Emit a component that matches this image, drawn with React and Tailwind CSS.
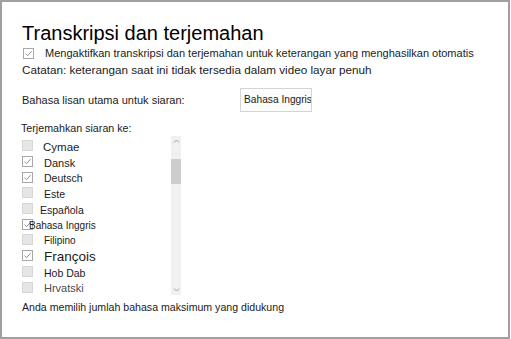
import React from "react";

const languages = [
  { name: "Cymae", size: "text-[11.5px]", ml: "ml-[10px]", checked: false },
  { name: "Dansk", size: "text-[11px]", ml: "ml-[11px]", checked: true },
  { name: "Deutsch", size: "text-[10.5px]", ml: "ml-[11px]", checked: true },
  { name: "Este", size: "text-[10.5px]", ml: "ml-[11px]", checked: false },
  { name: "Española", size: "text-[10.5px]", ml: "ml-[7px]", checked: false },
  { name: "Bahasa Inggris", size: "text-[10px]", ml: "ml-[-4px]", checked: true },
  { name: "Filipino", size: "text-[10px]", ml: "ml-[11px]", checked: false },
  { name: "François", size: "text-[13.5px]", ml: "ml-[11px]", checked: true },
  { name: "Hob Dab", size: "text-[10.5px]", ml: "ml-[11px]", checked: false },
  { name: "Hrvatski", size: "text-[11px]", ml: "ml-[11px]", checked: false, muted: true },
];

function Checkbox({ checked }) {
  if (!checked) {
    return (
      <span className="block h-[11px] w-[11px] shrink-0 border border-[#d6d6d6] bg-[#e6e6e6]" />
    );
  }
  return (
    <span className="flex h-[11px] w-[11px] shrink-0 items-center justify-center border border-[#a8a8a8] bg-white">
      <svg width="9" height="9" viewBox="0 0 9 9" fill="none">
        <path d="M1.5 4.6 L3.6 6.7 L7.6 2.2" stroke="#8c8c8c" strokeWidth="1" />
      </svg>
    </span>
  );
}

function Scrollbar() {
  return (
    <div className="flex h-full w-[10px] flex-col items-center bg-[#f0f0f0]">
      <svg className="mt-[3px]" width="7" height="5" viewBox="0 0 7 5" fill="none">
        <path d="M1 3.5 L3.5 1 L6 3.5" stroke="#a0a0a0" strokeWidth="1" />
      </svg>
      <div className="mt-[15px] h-[25px] w-full bg-[#cdcdcd]" />
      <div className="flex-1" />
      <svg className="mb-[3px]" width="7" height="5" viewBox="0 0 7 5" fill="none">
        <path d="M1 1.5 L3.5 4 L6 1.5" stroke="#a0a0a0" strokeWidth="1" />
      </svg>
    </div>
  );
}

export default function App() {
  return (
    <div className="h-[339px] w-[511px] bg-white font-['Liberation_Sans',Arial,sans-serif] text-[#1b1b1b]">
      <div className="flex h-[339px] w-[510px] flex-col border-2 border-[#a0a0a0] pl-[20px] pt-[19px]">
        <h1 className="text-[20px] leading-[24px] text-black">Transkripsi dan terjemahan</h1>

        <div className="flex h-[16px] items-center">
          <span className="ml-[1px]">
            <Checkbox checked />
          </span>
          <span className="ml-[11px] text-[11px] leading-[14px]">
            Mengaktifkan transkripsi dan terjemahan untuk keterangan yang menghasilkan otomatis
          </span>
        </div>
        <p className="mt-[1px] h-[16px] text-[11.7px] leading-[16px]">
          Catatan: keterangan saat ini tidak tersedia dalam video layar penuh
        </p>

        <div className="mt-[10px] flex h-[24px] items-center">
          <span className="w-[218px] shrink-0 text-[11px] leading-[14px]">
            Bahasa lisan utama untuk siaran:
          </span>
          <div className="flex h-[24px] w-[72px] items-center overflow-hidden border border-[#d4d4d4] bg-[#fcfcfc] pl-[3px]">
            <span className="whitespace-nowrap text-[10.2px] leading-[14px]">Bahasa Inggris</span>
          </div>
        </div>

        <p className="mt-[9px] h-[14px] text-[10.7px] leading-[14px] -ml-[1px]">Terjemahkan siaran ke:</p>

        <div className="mt-[1px] flex h-[159px]">
          <div className="flex w-[149px] flex-col pt-[2px]">
            {languages.map((lang) => (
              <div key={lang.name} className="flex h-[15.85px] items-center">
                <Checkbox checked={lang.checked} />
                <span
                  className={`${lang.ml} ${lang.size} mt-[3px] whitespace-nowrap leading-none ${
                    lang.muted ? "text-[#4d4d4d]" : ""
                  }`}
                >
                  {lang.name}
                </span>
              </div>
            ))}
          </div>
          <Scrollbar />
        </div>

        <p className="mt-[5px] text-[10.6px] leading-[14px]">
          Anda memilih jumlah bahasa maksimum yang didukung
        </p>
      </div>
    </div>
  );
}
